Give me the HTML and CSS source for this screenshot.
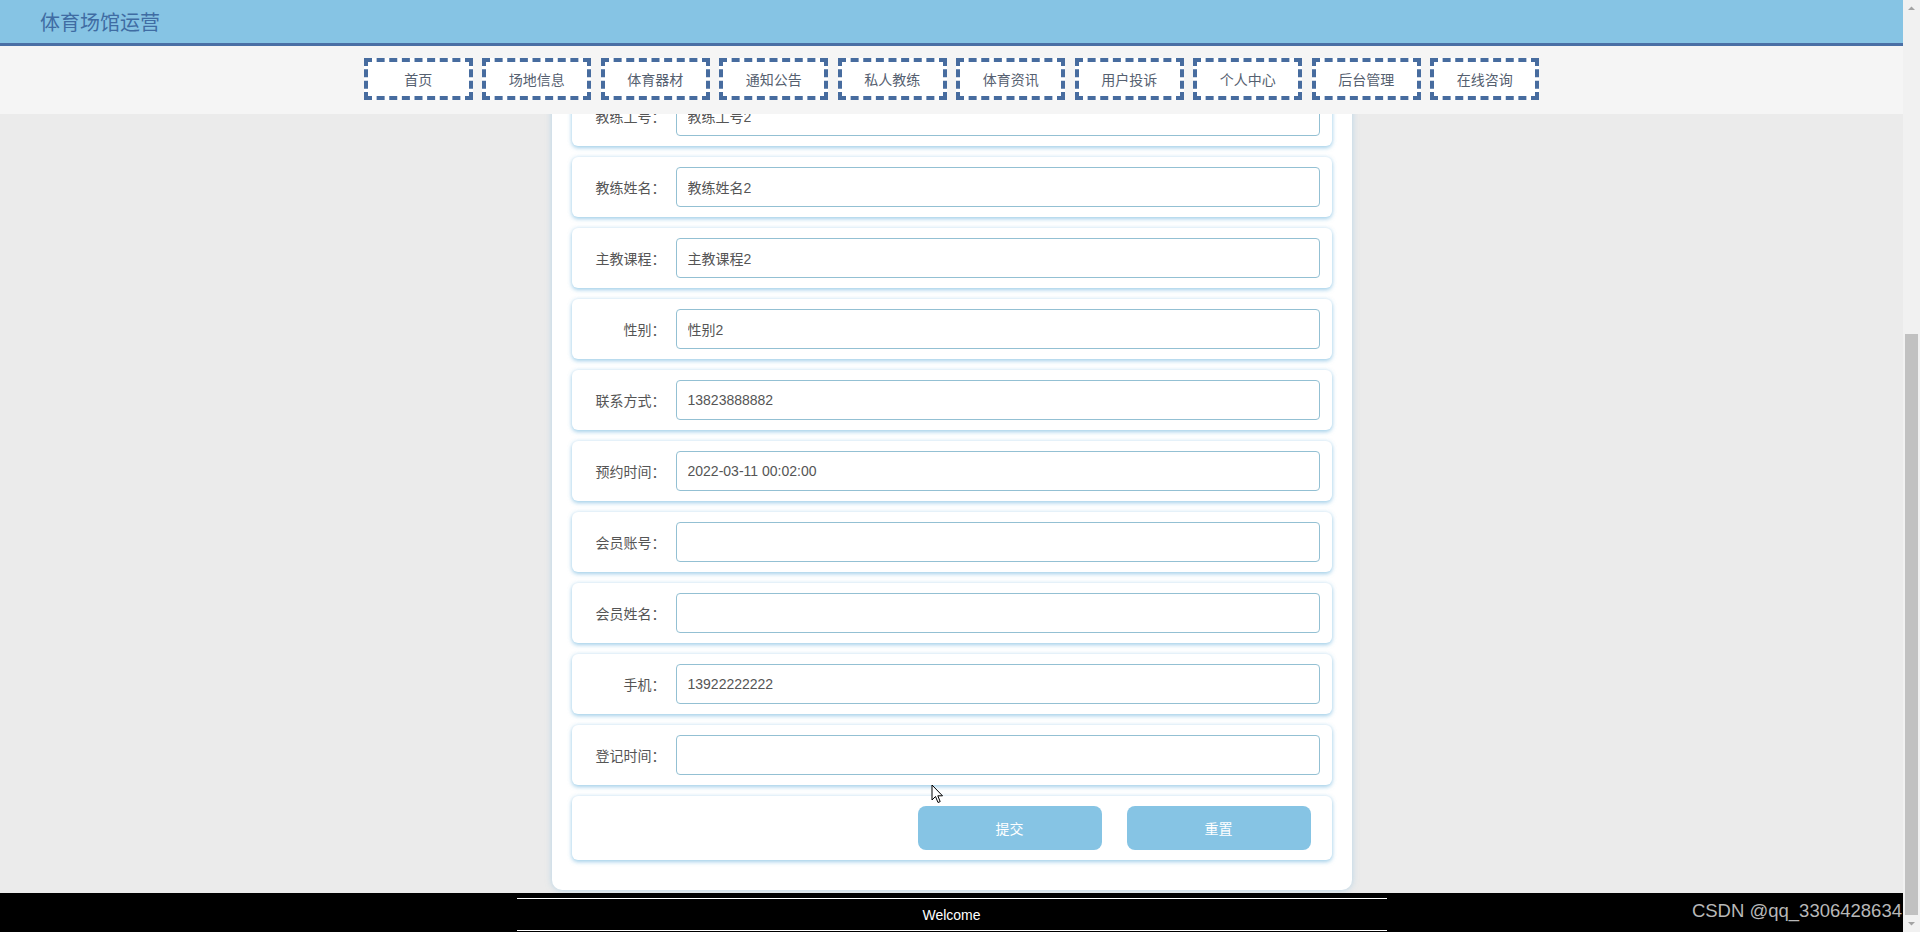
FILE: index.html
```html
<!DOCTYPE html>
<html lang="zh-CN">
<head>
<meta charset="utf-8">
<title>体育场馆运营</title>
<link rel="stylesheet" href="styles.css">
</head>
<body>
<div class="app">
  <div class="viewport">
    <div class="topbar">
      <div class="brand-bar">
        <span class="brand">体育场馆运营</span>
      </div>
      <nav class="nav">
        <a class="nav-item">首页</a>
        <a class="nav-item">场地信息</a>
        <a class="nav-item">体育器材</a>
        <a class="nav-item">通知公告</a>
        <a class="nav-item">私人教练</a>
        <a class="nav-item">体育资讯</a>
        <a class="nav-item">用户投诉</a>
        <a class="nav-item">个人中心</a>
        <a class="nav-item">后台管理</a>
        <a class="nav-item">在线咨询</a>
      </nav>
    </div>

    <main class="main">
      <form class="panel">
        <div class="row"><label class="row-label">教练工号：</label><input class="row-input" value="教练工号2"></div>
        <div class="row"><label class="row-label">教练姓名：</label><input class="row-input" value="教练姓名2"></div>
        <div class="row"><label class="row-label">主教课程：</label><input class="row-input" value="主教课程2"></div>
        <div class="row"><label class="row-label">性别：</label><input class="row-input" value="性别2"></div>
        <div class="row"><label class="row-label">联系方式：</label><input class="row-input" value="13823888882"></div>
        <div class="row"><label class="row-label">预约时间：</label><input class="row-input" value="2022-03-11 00:02:00"></div>
        <div class="row"><label class="row-label">会员账号：</label><input class="row-input" value=""></div>
        <div class="row"><label class="row-label">会员姓名：</label><input class="row-input" value=""></div>
        <div class="row"><label class="row-label">手机：</label><input class="row-input" value="13922222222"></div>
        <div class="row"><label class="row-label">登记时间：</label><input class="row-input" value=""></div>
        <div class="row row-actions">
          <button type="button" class="btn">提交</button>
          <button type="button" class="btn">重置</button>
        </div>
      </form>
    </main>

    <footer class="footer">
      <div class="footer-inner">Welcome</div>
      <span class="watermark">CSDN @qq_3306428634</span>
    </footer>

    <svg class="cursor" width="13" height="20" viewBox="0 0 13 20">
      <path d="M1 1 L1 16 L4.5 12.5 L7 18.5 L9.2 17.6 L6.8 11.8 L11.5 11.8 Z" fill="#fff" stroke="#000" stroke-width="1" stroke-linejoin="round"/>
    </svg>
  </div>

  <div class="scrollbar">
    <svg class="sb-arrow" width="17" height="17" viewBox="0 0 17 17"><path d="M5 10 L8.5 6.5 L12 10 Z" fill="#a3a3a3"/></svg>
    <div class="sb-track"><div class="sb-thumb"></div></div>
    <svg class="sb-arrow" width="17" height="17" viewBox="0 0 17 17"><path d="M5 7 L8.5 10.5 L12 7 Z" fill="#a3a3a3"/></svg>
  </div>
</div>
</body>
</html>
```

FILE: styles.css
```css
* { box-sizing: border-box; }

html, body {
  margin: 0;
  padding: 0;
}

body {
  background: #ebebeb;
  font-family: "Liberation Sans", "Noto Sans CJK SC", sans-serif;
  font-size: 14px;
  color: #555;
}

.app {
  display: flex;
  height: 932px;
  overflow: hidden;
}

.viewport {
  flex: 1;
  position: relative;
  display: flex;
  flex-direction: column;
  overflow: hidden;
}

/* fixed header overlaying the scrolled content */
.topbar {
  position: absolute;
  top: 0;
  left: 0;
  right: 0;
  z-index: 10;
}

.brand-bar {
  height: 46px;
  background: #86c4e4;
  border-bottom: 3px solid #4a6fa5;
  display: flex;
  align-items: center;
  padding-left: 40px;
  padding-bottom: 1px;
}

.brand {
  font-family: "Noto Sans CJK SC", sans-serif;
  font-size: 20px;
  color: #3f6ca3;
}

.nav {
  height: 68px;
  background: #f5f5f5;
  display: flex;
  justify-content: center;
  align-items: flex-start;
  padding-top: 12px;
}

.nav-item {
  width: 109px;
  height: 42px;
  margin: 0 4.75px;
  border: 4px dashed #476c9f;
  background: #fff;
  display: flex;
  align-items: center;
  justify-content: center;
  font-family: "Noto Sans CJK SC", sans-serif;
  font-size: 14px;
  color: #556070;
}

.main {
  flex: 1;
  display: flex;
  justify-content: center;
  padding-top: 66px;
  padding-bottom: 3px;
}

.panel {
  width: 800px;
  margin: 0;
  background: #fff;
  border-radius: 0 0 10px 10px;
  box-shadow: 0 0 6px rgba(135, 190, 225, 0.55);
  padding: 20px 20px 30px;
}

.row {
  height: 60px;
  margin-bottom: 11px;
  background: #fff;
  border-radius: 6px;
  box-shadow: 0 2px 4px rgba(110, 180, 220, 0.55), 0 0 4px rgba(140, 195, 230, 0.35);
  display: flex;
  align-items: center;
  padding: 10px 12px 10px 0;
}

.row-label {
  width: 104px;
  flex-shrink: 0;
  text-align: right;
  padding-right: 10px;
  font-family: "Noto Sans CJK SC", sans-serif;
  font-size: 14px;
  color: #555;
}

.row-input {
  flex: 1;
  height: 40px;
  border: 1px solid #93c0d3;
  border-radius: 4px;
  padding: 0 11px;
  font-family: "Liberation Sans", "Noto Sans CJK SC", sans-serif;
  font-size: 14px;
  color: #555;
  background: #fff;
  outline: none;
}

.row-actions {
  height: 64px;
  margin-bottom: 0;
  justify-content: flex-end;
  gap: 25px;
  padding: 10px 21px 10px 0;
}

.btn {
  width: 184px;
  height: 44px;
  border: none;
  border-radius: 8px;
  background: #86c4e4;
  color: #fff;
  font-family: "Noto Sans CJK SC", sans-serif;
  font-size: 14px;
  padding: 0;
}

.footer {
  height: 39px;
  background: #000;
  position: relative;
  display: flex;
  justify-content: center;
  padding-top: 5px;
}

.footer-inner {
  width: 870px;
  height: 33px;
  border-top: 1px solid #fff;
  border-bottom: 1px solid #fff;
  display: flex;
  align-items: center;
  justify-content: center;
  color: #fff;
  font-family: "Liberation Sans", sans-serif;
  font-size: 14px;
}

.watermark {
  position: absolute;
  right: 1px;
  top: 7px;
  font-family: "Liberation Sans", sans-serif;
  font-size: 18.5px;
  color: #b8b8b8;
  white-space: nowrap;
}

.cursor {
  position: absolute;
  left: 931px;
  top: 784px;
  z-index: 20;
}

.scrollbar {
  width: 17px;
  flex-shrink: 0;
  background: #f1f1f1;
  display: flex;
  flex-direction: column;
  position: relative;
  z-index: 30;
}

.sb-arrow {
  display: block;
  flex-shrink: 0;
}

.sb-track {
  flex: 1;
  display: flex;
  flex-direction: column;
  justify-content: flex-end;
  padding: 0 2px;
}

.sb-thumb {
  height: 581px;
  background: #c1c1c1;
}
```
